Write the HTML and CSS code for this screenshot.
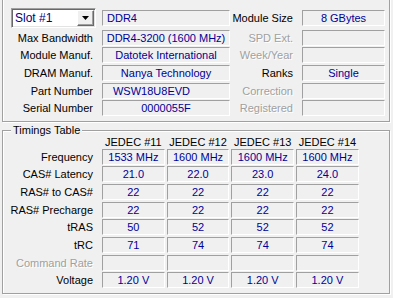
FILE: index.html
```html
<!DOCTYPE html>
<html lang="en">
<head>
    <meta charset="UTF-8">
    <meta name="viewport" content="width=device-width, initial-scale=1.0">
    <title>SPD</title>
    <link rel="stylesheet" href="styles.css">
</head>
<body>
    <fieldset class="group slot-group">
        <legend>Memory Slot Selection</legend>
        <div class="slot-grid">
            <div class="combo">
                <span class="combo-text">Slot #1</span>
                <span class="combo-btn">
                    <svg width="7" height="4" viewBox="0 0 7 4"><polygon points="0,0 7,0 3.5,4" fill="#000"/></svg>
                </span>
            </div>
            <div class="field left">DDR4</div>
            <div class="label">Module Size</div>
            <div class="field">8 GBytes</div>

            <div class="label">Max Bandwidth</div>
            <div class="field">DDR4-3200 (1600 MHz)</div>
            <div class="label off">SPD Ext.</div>
            <div class="field"></div>

            <div class="label">Module Manuf.</div>
            <div class="field">Datotek International</div>
            <div class="label off">Week/Year</div>
            <div class="field"></div>

            <div class="label">DRAM Manuf.</div>
            <div class="field">Nanya Technology</div>
            <div class="label">Ranks</div>
            <div class="field">Single</div>

            <div class="label">Part Number</div>
            <div class="field part">WSW18U8EVD</div>
            <div class="label off">Correction</div>
            <div class="field"></div>

            <div class="label">Serial Number</div>
            <div class="field">0000055F</div>
            <div class="label off">Registered</div>
            <div class="field"></div>
        </div>
    </fieldset>

    <fieldset class="group timing-group">
        <legend>Timings Table</legend>
        <div class="timing-grid">
            <div></div>
            <div class="head">JEDEC #11</div>
            <div class="head">JEDEC #12</div>
            <div class="head">JEDEC #13</div>
            <div class="head">JEDEC #14</div>

            <div class="label">Frequency</div>
            <div class="field">1533 MHz</div>
            <div class="field">1600 MHz</div>
            <div class="field">1600 MHz</div>
            <div class="field">1600 MHz</div>

            <div class="label">CAS# Latency</div>
            <div class="field">21.0</div>
            <div class="field">22.0</div>
            <div class="field">23.0</div>
            <div class="field">24.0</div>

            <div class="label">RAS# to CAS#</div>
            <div class="field">22</div>
            <div class="field">22</div>
            <div class="field">22</div>
            <div class="field">22</div>

            <div class="label">RAS# Precharge</div>
            <div class="field">22</div>
            <div class="field">22</div>
            <div class="field">22</div>
            <div class="field">22</div>

            <div class="label">tRAS</div>
            <div class="field">50</div>
            <div class="field">52</div>
            <div class="field">52</div>
            <div class="field">52</div>

            <div class="label">tRC</div>
            <div class="field">71</div>
            <div class="field">74</div>
            <div class="field">74</div>
            <div class="field">74</div>

            <div class="label off">Command Rate</div>
            <div class="field"></div>
            <div class="field"></div>
            <div class="field"></div>
            <div class="field"></div>

            <div class="label">Voltage</div>
            <div class="field">1.20 V</div>
            <div class="field">1.20 V</div>
            <div class="field">1.20 V</div>
            <div class="field">1.20 V</div>
        </div>
    </fieldset>
</body>
</html>
```

FILE: styles.css
```css
body {
    margin: 0;
    width: 393px;
    height: 298px;
    overflow: hidden;
    background-color: #f0f0f0;
    font-family: "Liberation Sans", Arial, sans-serif;
    font-size: 11px;
    color: #000;
}

.group {
    box-sizing: border-box;
    width: 388px;
    margin: 0 0 0 2px;
    padding: 0;
    border: 1px solid #a0a0a0;
    box-shadow: inset 1px 1px 0 #fff, 1px 1px 0 #fff;
    min-inline-size: 0;
}

.group legend {
    padding: 0 2px;
    line-height: 13px;
    background-color: #f0f0f0;
}

.slot-group {
    margin-top: -12px;
    padding: 7px 0 4.5px 0;
}

.slot-group legend {
    margin-left: 5px;
}

.timing-group {
    margin-top: 2px;
    padding: 0 0 5px 0;
}

.timing-group legend {
    margin-left: 8px;
}

.slot-grid {
    display: grid;
    grid-template-columns: 99px 128px 72px 83px;
    grid-template-rows: 20px repeat(5, 16px);
    row-gap: 1.7px;
    align-items: center;
}

.timing-grid {
    display: grid;
    grid-template-columns: 97px repeat(4, 62.7px);
    grid-template-rows: 10px repeat(8, 16px);
    column-gap: 2px;
    row-gap: 1.7px;
    align-items: center;
}

.label {
    text-align: right;
    padding-right: 9px;
    line-height: 16px;
    white-space: nowrap;
}

.timing-grid .label {
    padding-right: 7px;
}

.label.off {
    color: #a0a0a0;
    text-shadow: 1px 1px 0 #fff;
}

.head {
    text-align: center;
    line-height: 10px;
    white-space: nowrap;
}

.field {
    box-sizing: border-box;
    height: 16px;
    border: 1px solid;
    border-color: #a0a0a0 #fff #fff #a0a0a0;
    color: #000096;
    text-align: center;
    line-height: 14px;
    white-space: nowrap;
    overflow: hidden;
}

.field.left {
    text-align: left;
    padding-left: 4px;
}

.field.part {
    padding-right: 29px;
}

.combo {
    box-sizing: border-box;
    display: flex;
    align-items: center;
    width: 85px;
    height: 20px;
    margin-left: 8px;
    background-color: #fff;
    border: 1px solid;
    border-color: #a0a0a0 #fff #fff #a0a0a0;
    box-shadow: inset 1px 1px 0 #696969, inset -1px -1px 0 #e3e3e3;
    padding: 1px;
}

.combo-text {
    flex: 1;
    padding-left: 2px;
    color: #000080;
    font-size: 12px;
}

.combo-btn {
    box-sizing: border-box;
    display: flex;
    align-items: center;
    justify-content: center;
    width: 17px;
    height: 16px;
    background-color: #f0f0f0;
    border: 1px solid;
    border-color: #fff #696969 #696969 #fff;
    box-shadow: inset -1px -1px 0 #a0a0a0;
}
```
